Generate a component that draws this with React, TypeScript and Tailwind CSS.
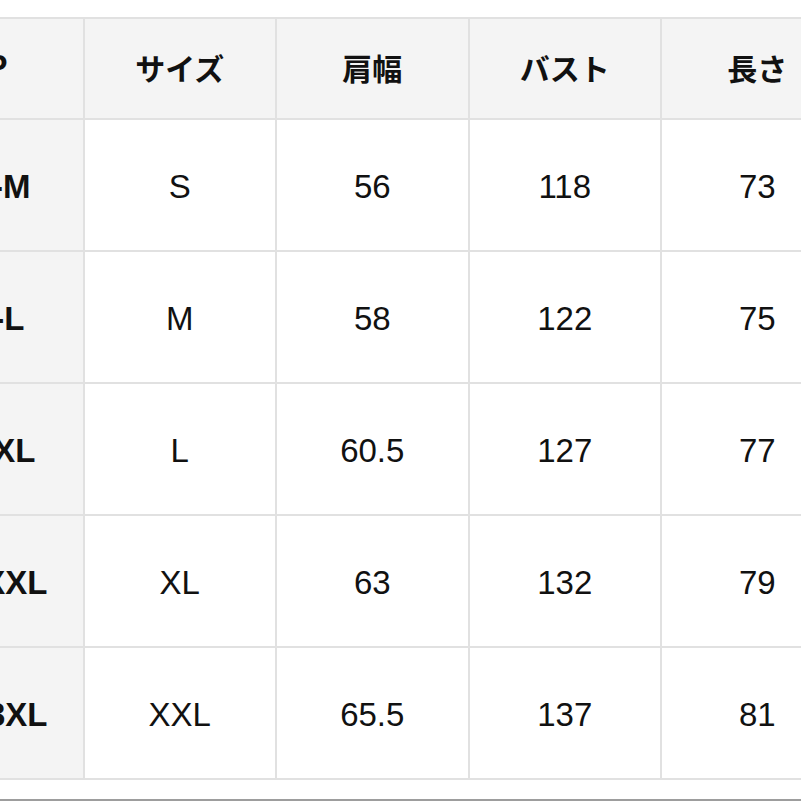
import React from "react";

const headers = ["サイズ", "肩幅", "バスト", "長さ"];

const rows: { label: string; pad: string; cells: string[] }[] = [
  { label: "S-M", pad: "pr-[52px]", cells: ["S", "56", "118", "73"] },
  { label: "M-L", pad: "pr-[58px]", cells: ["M", "58", "122", "75"] },
  { label: "L-XL", pad: "pr-[47px]", cells: ["L", "60.5", "127", "77"] },
  { label: "XL-XXL", pad: "pr-[35px]", cells: ["XL", "63", "132", "79"] },
  { label: "2XL-3XL", pad: "pr-[35px]", cells: ["XXL", "65.5", "137", "81"] },
];

const latin = "font-['Liberation_Sans','Noto_Sans_CJK_JP',sans-serif]";
const jp = "font-['Noto_Sans_CJK_JP','Liberation_Sans',sans-serif]";

export default function App() {
  return (
    <div className="w-[801px] h-[801px] bg-white overflow-hidden text-[#111]">
      <div className="pt-[17px]">
        <div className="ml-[-110px] w-max bg-[#e1e1e1] p-[2px] grid grid-cols-[190.5px_190.5px_190.5px_190.5px_190.5px] gap-[2px]">
          <div className={`h-[99px] bg-[#f4f4f4] flex items-center justify-end pr-[75px] pb-[3px] text-[33px] font-bold ${latin}`}>
            JP
          </div>
          {headers.map((h) => (
            <div
              key={h}
              className={`h-[99px] bg-[#f4f4f4] flex items-center justify-center pb-[3px] text-[30px] font-bold ${jp}`}
            >
              {h}
            </div>
          ))}
          {rows.map((r) => (
            <React.Fragment key={r.label}>
              <div
                className={`h-[130px] bg-[#f4f4f4] flex items-center justify-end ${r.pad} pt-[4px] text-[33px] font-bold whitespace-nowrap ${latin}`}
              >
                {r.label}
              </div>
              {r.cells.map((c, i) => (
                <div
                  key={i}
                  className={`h-[130px] bg-white flex items-center justify-center text-[33px] pt-[3px] ${latin}`}
                >
                  {c}
                </div>
              ))}
            </React.Fragment>
          ))}
        </div>
        <div className="mt-[19px] h-[2px] bg-[#9d9d9d]" />
      </div>
    </div>
  );
}
